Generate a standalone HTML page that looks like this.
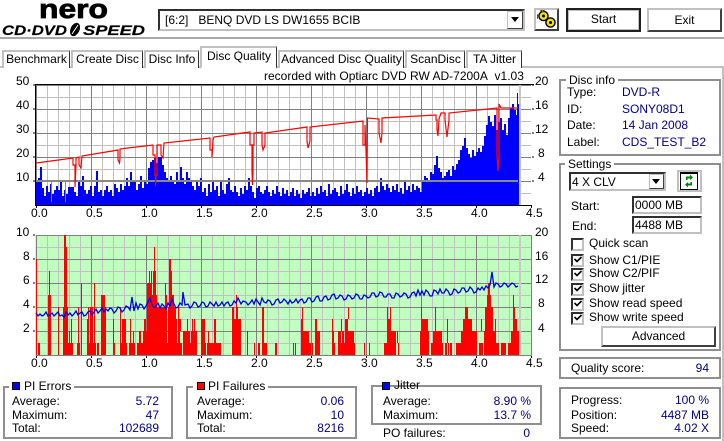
<!DOCTYPE html>
<html><head><meta charset="utf-8"><style>
html,body{margin:0;padding:0;background:#fff}
body{width:724px;height:441px;position:relative;overflow:hidden;font:12px/14px "Liberation Sans",sans-serif;color:#000}
.t{position:absolute;white-space:nowrap;height:14px;line-height:14px}
.v{color:#000080;text-align:right}
.b{position:absolute;box-sizing:border-box}
.g{position:absolute;box-sizing:border-box;border:2px solid #8f8f8f;background:transparent}
.tab{position:absolute;box-sizing:border-box;top:50px;height:18px;border:2px solid #c0c0c0;border-bottom:0;border-right:1px solid #303030;background:#fff;text-align:center;line-height:14px}
.btn{position:absolute;box-sizing:border-box;background:#fff;border:2px solid #c0c0c0;border-right-color:#404040;border-bottom-color:#404040;text-align:center}
.inp{position:absolute;box-sizing:border-box;background:#fff;border:2px solid #c0c0c0;border-top-color:#303030;border-left-color:#303030}
.cb{position:absolute;box-sizing:border-box;left:571px;width:13px;height:13px;background:#fff;border:2px solid #c0c0c0;border-top-color:#303030;border-left-color:#303030}
.lg{background:#fff;padding:0 3px}
.sq{position:absolute;box-sizing:border-box;width:8px;height:8px;border:1px solid #000}
</style></head><body>

<svg class="b" style="left:0;top:0" width="150" height="38" viewBox="0 0 150 38">
<text x="39" y="18" font-family="Liberation Sans" font-weight="700" font-size="27" textLength="69" lengthAdjust="spacingAndGlyphs" stroke="#000" stroke-width=".8">nero</text>
<text x="2" y="35" font-family="Liberation Sans" font-weight="700" font-style="italic" font-size="14" textLength="65" lengthAdjust="spacingAndGlyphs" stroke="#000" stroke-width=".2">CD·DVD</text>
<ellipse cx="75" cy="29.5" rx="4.5" ry="7" transform="rotate(25 75 29.5)" fill="#000"/>
<path d="M72 34L78 25" stroke="#fff" stroke-width="1"/>
<text x="83" y="35" font-family="Liberation Sans" font-weight="700" font-style="italic" font-size="14" textLength="62" lengthAdjust="spacingAndGlyphs" stroke="#000" stroke-width=".2">SPEED</text>
</svg>

<div class="inp" style="left:158px;top:9px;width:367px;height:22px"></div>
<div class="t" style="left:165px;top:13px">[6:2]&nbsp;&nbsp; BENQ DVD LS DW1655 BCIB</div>
<div class="btn" style="left:507px;top:11px;width:16px;height:18px;border-width:1px"></div>
<svg class="b" style="left:511px;top:17px" width="9" height="6"><path d="M0 0H8L4 5Z" fill="#000"/></svg>

<div class="btn" style="left:534px;top:8px;width:25px;height:23px"></div>
<svg class="b" style="left:537px;top:10px" width="20" height="19" viewBox="0 0 20 19">
<circle cx="6.500" cy="6" r="4.600" fill="#f4e400" stroke="#000" stroke-width="1.400"/>
<circle cx="13.500" cy="12.500" r="4.600" fill="#f4e400" stroke="#000" stroke-width="1.400"/>
<path d="M4 1.500V0H7V1.500M1 8H0V5H1" stroke="#000" fill="#f4e400"/>
<circle cx="6.500" cy="6" r="1.500" fill="#000"/><circle cx="13.500" cy="12.500" r="1.500" fill="#000"/>
</svg>
<div class="btn" style="left:566px;top:8px;width:75px;height:24px;border:2px solid #202020;line-height:19px;box-shadow:inset 0 0 0 1px #c0c0c0">Start</div>
<div class="btn" style="left:647px;top:8px;width:75px;height:24px;line-height:20px">Exit</div>
<div class="b" style="left:0;top:37px;width:724px;height:2px;background:#a8a8a8"></div>

<div class="b" style="left:0;top:66px;width:724px;height:375px;border:2px solid #c0c0c0;border-bottom:0;border-left:0"></div>
<div class="tab" style="left:2px;width:68px">Benchmark</div>
<div class="tab" style="left:71px;width:72px">Create Disc</div>
<div class="tab" style="left:144px;width:55px">Disc Info</div>
<div class="tab" style="left:200px;width:77px;top:46px;height:23px;padding-top:1px;border-bottom:2px solid #fff">Disc Quality</div>
<div class="tab" style="left:278px;width:126px">Advanced Disc Quality</div>
<div class="tab" style="left:405px;width:60px">ScanDisc</div>
<div class="tab" style="left:466px;width:56px">TA Jitter</div>

<div class="t" style="left:264px;top:69px">recorded with Optiarc DVD RW AD-7200A&nbsp; v1.03</div>

<svg class="b" style="left:0;top:0" width="550" height="375" viewBox="0 0 550 375">
<defs>
<pattern id="p1" x="36" y="85" width="55" height="24" patternUnits="userSpaceOnUse">
<path d="M11.5 0V24M22.5 0V24M33.5 0V24M44.5 0V24M0 12.5H55" stroke="#c0c0c0" fill="none"/>
<path d="M.5 0V24M0 .5H55" stroke="#808080" fill="none"/>
</pattern>
<pattern id="p2" x="36" y="235" width="55" height="24" patternUnits="userSpaceOnUse">
<path d="M11.5 0V24M22.5 0V24M33.5 0V24M44.5 0V24M0 12.5H55" stroke="#c0c0c0" fill="none"/>
<path d="M.5 0V24M0 .5H55" stroke="#808080" fill="none"/>
</pattern>
</defs>
<rect x="36" y="85" width="495" height="121" fill="#fff"/>
<rect x="36" y="85" width="495" height="121" fill="url(#p1)"/>
<path d="M36 205V182h2V178h2V167h2V188h2V196h2V186h2V192h2V184h2V194h2V190h2V186h2V190h2V182h2V196h2V190h2V194h2V187h2V187h2V187h2V192h2V196h2V180h2V186h2V176h2V190h2V194h2V190h2V186h2V196h2V186h2V171h2V192h2V190h2V196h2V190h2V186h2V192h2V190h2V196h2V184h2V188h2V192h2V184h2V190h2V186h2V178h2V186h2V172h2V180h2V182h2V190h2V184h2V176h2V188h2V180h2V184h2V168h2V162h2V160h2V158h2V163h2V157h2V157h2V165h2V172h2V178h2V182h2V176h2V180h2V184h2V172h2V180h2V167h2V178h2V184h2V172h2V178h2V182h2V186h2V190h2V180h2V186h2V178h2V192h2V188h2V196h2V184h2V192h2V180h2V190h2V186h2V196h2V182h2V190h2V194h2V184h2V178h2V190h2V192h2V186h2V192h2V196h2V188h2V194h2V186h2V190h2V178h2V186h2V192h2V198h2V188h2V186h2V192h2V194h2V190h2V186h2V192h2V196h2V190h2V194h2V186h2V192h2V196h2V188h2V194h2V190h2V196h2V192h2V188h2V196h2V190h2V194h2V198h2V190h2V194h2V192h2V188h2V196h2V192h2V196h2V188h2V194h2V186h2V192h2V190h2V196h2V184h2V194h2V190h2V188h2V192h2V196h2V186h2V194h2V190h2V184h2V192h2V196h2V188h2V194h2V186h2V192h2V190h2V196h2V192h2V188h2V194h2V190h2V196h2V188h2V186h2V192h2V178h2V186h2V190h2V184h2V188h2V192h2V186h2V190h2V184h2V192h2V188h2V194h2V182h2V190h2V186h2V192h2V184h2V190h2V186h2V188h2V192h2V180h2V176h2V178h2V182h2V172h2V174h2V165h2V156h2V168h2V172h2V178h2V176h2V172h2V170h2V176h2V166h2V170h2V164h2V160h2V150h2V146h2V138h2V148h2V154h2V158h2V150h2V156h2V152h2V148h2V152h2V146h2V136h2V125h2V116h2V122h2V126h2V115h2V130h2V122h2V118h2V130h2V124h2V135h2V118h2V108h2V104h2V110h2V115h1V93h1V104h1V205Z" fill="#0000ff"/>
<path d="M36 181H518" stroke="#888" stroke-width="2" fill="none"/>
<path d="M51.500 181V202M65.500 181V202" stroke="#888" fill="none"/>
<rect x="519" y="85" width="2" height="120" fill="#c8c8c8"/>
<path d="M36 163L73 158V165H75V187L76 165V158L79 157V165L81 168L82 156L118 150V160L119.500 163L120 158V149L153 145V155H155V175H155.500V186L156 175H157V145H161V155L163 158L164 143L210 138V150H212V157L213 140L214 137L250 132V145H252V171L252.500 185L253 171V145H254V133L262 132V145L263 150L265 145V133L307 127V141L308 148L310 141V127L363 121V145H365V125L366 150L367 183L367.500 118L379 119V133L381 143L382 133V118L436 115V120H437V130L438 136L439 119L441 113L445 113V120L447 137L449 120V113L497 108V155L498 171L499 155V104L501 108L518 108" stroke="#f00" stroke-width="1.200" fill="none"/>
<path d="M35.500 84V206M35 84.500H534M35 205.500H532" stroke="#000" fill="none"/>
<path d="M33 85H35M33 109H35M33 133H35M33 157H35M33 181H35M36.500 206V208M91.500 206V208M146.500 206V208M201.500 206V208M256.500 206V208M311.500 206V208M366.500 206V208M421.500 206V208M476.500 206V208M531.500 206V208M532 85H534M532 109H534M532 133H534M532 157H534M532 181H534" stroke="#000" fill="none"/>

<rect x="35" y="235" width="497" height="121" fill="#c0ffc0"/>
<rect x="36" y="235" width="496" height="121" fill="url(#p2)"/>
<g fill="none" stroke="#f00" stroke-width="12">
<path d="M36 349h1M38 349h2M48 349h3M58 349h1M63 349h10M77 349h3M81 349h1M87 349h6M93 349h3M97 349h2M101 349h5M113 349h2M120 349h7M129 349h6M137 349h45M183 349h14M201 349h5M207 349h12M219 349h2M232 349h9M247 349h1M254 349h1M258 349h2M262 349h5M275 349h2M293 349h1M295 349h1M301 349h10M312 349h1M315 349h5M332 349h3M338 349h6M344 349h11M364 349h1M369 349h1M384 349h12M398 349h1M420 349h9M431 349h12M445 349h2M448 349h1M450 349h2M456 349h21M479 349h4M484 349h14M498 349h1M501 349h5M508 349h3M511 349h9"/>
<path d="M36 337h1M48 337h3M58 337h1M63 337h5M69 337h1M71 337h1M78 337h1M81 337h1M87 337h2M90 337h3M94 337h1M101 337h5M113 337h1M120 337h1M122 337h4M130 337h1M133 337h1M139 337h2M143 337h24M168 337h9M178 337h2M183 337h7M191 337h6M201 337h4M208 337h1M214 337h2M232 337h9M247 337h1M262 337h2M301 337h8M315 337h5M332 337h2M338 337h3M342 337h2M345 337h9M387 337h9M397 337h1M420 337h9M433 337h9M447 337h1M461 337h16M484 337h11M495 337h1M511 337h9"/>
<path d="M36 325h1M48 325h3M58 325h1M63 325h5M71 325h1M78 325h1M81 325h1M87 325h2M90 325h3M94 325h1M101 325h5M113 325h1M120 325h1M122 325h4M130 325h1M144 325h2M147 325h20M168 325h9M178 325h3M187 325h1M192 325h1M194 325h1M201 325h4M214 325h2M232 325h9M262 325h2M301 325h2M315 325h2M332 325h1M341 325h1M345 325h3M387 325h4M421 325h7M435 325h1M447 325h1M463 325h8M471 325h1M481 325h1M485 325h8M495 325h1M513 325h3M516 325h1"/>
<path d="M36 313h1M48 313h3M58 313h1M63 313h5M78 313h1M81 313h1M88 313h1M90 313h3M94 313h1M101 313h5M120 313h1M147 313h20M168 313h8M178 313h1M232 313h2M236 313h2M262 313h2M302 313h1M348 313h1M387 313h1M390 313h1M421 313h1M435 313h1M465 313h3M485 313h8M513 313h2"/>
<path d="M36 301h1M48 301h3M64 301h3M81 301h1M94 301h1M101 301h4M147 301h4M151 301h6M165 301h2M169 301h5M236 301h1M487 301h4M513 301h1"/>
<path d="M36 289h1M49 289h1M64 289h3M81 289h1M94 289h1M147 289h4M151 289h1M153 289h3M165 289h1M169 289h3M488 289h2"/>
<path d="M36 277h1M49 277h1M64 277h3M149 277h1M151 277h1M153 277h3M169 277h3"/>
<path d="M36 265h1M64 265h3M154 265h1M169 265h2"/>
<path d="M64 253h3M154 253h1"/>
<path d="M64 241h2"/>
</g>
<rect x="519" y="235" width="2" height="120" fill="#c8c8c8"/>
<polyline fill="none" stroke="#0000e8" stroke-width="1.300" points="36,313 38,316 40,314 42,316 44,315 46,312 48,316 50,315 52,313 54,316 56,314 58,312 60,316 62,315 64,317 66,312 68,315 70,313 72,316 74,314 76,311 78,315 80,313 82,312 84,316 86,315 88,312 90,311 92,315 94,312 96,309 98,313 100,311 102,308 104,312 106,309 108,311 110,308 112,309 114,313 116,311 118,307 120,308 122,312 124,310 126,306 128,307 130,310 132,297 134,311 136,303 138,309 140,304 142,305 144,309 146,306 148,302 150,298 152,305 154,308 156,306 158,303 160,308 162,304 164,306 166,309 168,303 170,306 172,299 174,304 176,308 178,307 180,303 182,305 183,292 185,305 188,304 190,308 192,306 194,302 196,303 198,307 200,306 202,302 204,303 206,307 208,306 210,302 212,304 214,306 216,302 218,306 220,305 222,302 224,306 226,303 228,302 230,306 232,305 234,301 236,303 238,298 241,304 243,301 246,302 248,305 250,303 252,300 254,304 256,299 258,302 260,305 262,298 264,302 266,303 268,300 270,301 272,305 274,304 276,300 278,299 280,303 282,302 284,299 286,301 288,304 290,300 292,303 294,302 296,299 298,303 300,300 302,299 304,303 306,302 308,298 310,298 312,302 314,301 316,297 318,296 320,301 322,301 324,297 326,296 328,300 330,299 332,295 334,294 336,299 338,298 340,295 342,296 344,300 346,299 348,295 350,296 352,299 354,298 356,294 358,295 360,299 362,299 364,295 366,296 368,298 370,297 372,293 374,293 376,297 378,296 380,292 382,293 384,297 386,297 388,294 390,294 392,298 394,298 396,293 398,294 400,297 402,296 404,293 406,294 408,298 410,297 412,293 414,292 416,296 418,290 420,295 422,291 424,295 426,290 428,292 430,296 432,296 434,290 436,291 438,294 440,289 442,293 444,293 446,289 448,291 450,295 452,294 454,289 456,290 458,293 460,292 462,288 464,288 466,292 468,291 470,287 472,289 474,293 476,292 478,288 480,290 482,287 484,290 486,286 488,288 490,285 492,272 494,287 496,283 498,284 500,287 502,286 504,283 506,284 508,287 510,285 512,283 514,284 516,287 518,286"/>
<path d="M33 235H35M33 259H35M33 283H35M33 307H35M33 331H35M36.500 356V358M91.500 356V358M146.500 356V358M201.500 356V358M256.500 356V358M311.500 356V358M366.500 356V358M421.500 356V358M476.500 356V358M531.500 356V358" stroke="#000" fill="none"/>
</svg>

<div class="t" style="left:16px;top:74px">50</div><div class="t" style="left:16px;top:98px">40</div><div class="t" style="left:16px;top:122px">30</div><div class="t" style="left:16px;top:146px">20</div><div class="t" style="left:16px;top:170px">10</div>
<div class="t" style="left:535px;top:74px">20</div><div class="t" style="left:535px;top:98px">16</div><div class="t" style="left:535px;top:122px">12</div><div class="t" style="left:538px;top:146px">8</div><div class="t" style="left:538px;top:170px">4</div>
<div class="t" style="left:31px;top:206px">0.0</div><div class="t" style="left:86px;top:206px">0.5</div><div class="t" style="left:141px;top:206px">1.0</div><div class="t" style="left:196px;top:206px">1.5</div><div class="t" style="left:251px;top:206px">2.0</div><div class="t" style="left:306px;top:206px">2.5</div><div class="t" style="left:361px;top:206px">3.0</div><div class="t" style="left:416px;top:206px">3.5</div><div class="t" style="left:471px;top:206px">4.0</div><div class="t" style="left:526px;top:206px">4.5</div>

<div class="t" style="left:16px;top:225px">10</div><div class="t" style="left:23px;top:249px">8</div><div class="t" style="left:23px;top:273px">6</div><div class="t" style="left:23px;top:297px">4</div><div class="t" style="left:23px;top:321px">2</div>
<div class="t" style="left:535px;top:225px">20</div><div class="t" style="left:535px;top:249px">16</div><div class="t" style="left:535px;top:272px">12</div><div class="t" style="left:538px;top:296px">8</div><div class="t" style="left:538px;top:321px">4</div>
<div class="t" style="left:31px;top:356px">0.0</div><div class="t" style="left:86px;top:356px">0.5</div><div class="t" style="left:141px;top:356px">1.0</div><div class="t" style="left:196px;top:356px">1.5</div><div class="t" style="left:251px;top:356px">2.0</div><div class="t" style="left:306px;top:356px">2.5</div><div class="t" style="left:361px;top:356px">3.0</div><div class="t" style="left:416px;top:356px">3.5</div><div class="t" style="left:471px;top:356px">4.0</div><div class="t" style="left:526px;top:356px">4.5</div>

<div class="g" style="left:559px;top:79px;width:162px;height:77px"></div>
<div class="t lg" style="left:566px;top:73px">Disc info</div>
<div class="t" style="left:567px;top:85px">Type:</div><div class="t" style="left:622px;top:85px;color:#000080">DVD-R</div>
<div class="t" style="left:567px;top:102px">ID:</div><div class="t" style="left:622px;top:102px;color:#000080">SONY08D1</div>
<div class="t" style="left:567px;top:118px">Date:</div><div class="t" style="left:622px;top:118px;color:#000080">14 Jan 2008</div>
<div class="t" style="left:567px;top:135px">Label:</div><div class="t" style="left:622px;top:135px;color:#000080">CDS_TEST_B2</div>

<div class="g" style="left:559px;top:163px;width:162px;height:188px"></div>
<div class="t lg" style="left:565px;top:157px">Settings</div>
<div class="inp" style="left:569px;top:172px;width:97px;height:19px"></div>
<div class="t" style="left:572px;top:175px">4 X CLV</div>
<div class="btn" style="left:649px;top:174px;width:15px;height:15px;border-width:1px"></div>
<svg class="b" style="left:652px;top:179px" width="9" height="6"><path d="M0 0H8L4 5Z" fill="#000"/></svg>
<div class="b" style="left:677px;top:170px;width:25px;height:22px;border:2px solid #c0c0c0;background:#fff"></div>
<div class="b" style="left:680px;top:172px;width:18px;height:18px;border:1px solid #000;border-top-width:2px;background:#fff"></div>
<svg class="b" style="left:682px;top:173px" width="14" height="16" viewBox="0 0 14 16"><path d="M4 7V3.500H8V1.500L11 4.500L8 7V5.500H5.500V7ZM10 9V12.500H6V14.500L3 11.500L6 9V10.500H8.500V9Z" fill="#008000"/></svg>
<div class="t" style="left:571px;top:199px">Start:</div>
<div class="inp" style="left:632px;top:196px;width:70px;height:18px"></div>
<div class="t" style="left:635px;top:198px">0000 MB</div>
<div class="t" style="left:572px;top:219px">End:</div>
<div class="inp" style="left:632px;top:216px;width:70px;height:18px"></div>
<div class="t" style="left:635px;top:218px">4488 MB</div>

<div class="cb" style="top:238px"></div><div class="t" style="left:589px;top:236px">Quick scan</div>
<div class="cb" style="top:254px"></div><div class="t" style="left:589px;top:253px">Show C1/PIE</div>
<div class="cb" style="top:268px"></div><div class="t" style="left:589px;top:266px">Show C2/PIF</div>
<div class="cb" style="top:283px"></div><div class="t" style="left:589px;top:281px">Show jitter</div>
<div class="cb" style="top:298px"></div><div class="t" style="left:589px;top:296px">Show read speed</div>
<div class="cb" style="top:312px"></div><div class="t" style="left:589px;top:310px">Show write speed</div>
<svg class="b" style="left:573px;top:254px" width="10" height="72" fill="none" stroke="#000" stroke-width="1.600"><path d="M1.500 5L4 7.500L8.500 3M1.500 19L4 21.500L8.500 17M1.500 34L4 36.500L8.500 32M1.500 49L4 51.500L8.500 47M1.500 63L4 65.500L8.500 61"/></svg>
<div class="btn" style="left:601px;top:326px;width:115px;height:21px;line-height:17px">Advanced</div>

<div class="g" style="left:559px;top:357px;width:162px;height:22px"></div>
<div class="t" style="left:571px;top:361px">Quality score:</div><div class="t v" style="left:660px;width:49px;top:361px">94</div>
<div class="g" style="left:559px;top:387px;width:162px;height:52px"></div>
<div class="t" style="left:571px;top:393px">Progress:</div><div class="t v" style="left:640px;width:69px;top:393px">100 %</div>
<div class="t" style="left:571px;top:408px">Position:</div><div class="t v" style="left:640px;width:69px;top:408px">4487 MB</div>
<div class="t" style="left:571px;top:421px">Speed:</div><div class="t v" style="left:640px;width:69px;top:421px">4.02 X</div>

<div class="g" style="left:3px;top:386px;width:170px;height:53px"></div>
<div class="t lg" style="left:9px;top:379px;padding-left:15px">PI Errors</div>
<div class="sq" style="left:12px;top:382px;background:#00f"></div>
<div class="t" style="left:12px;top:394px">Average:</div><div class="t v" style="left:100px;width:59px;top:394px">5.72</div>
<div class="t" style="left:12px;top:408px">Maximum:</div><div class="t v" style="left:100px;width:59px;top:408px">47</div>
<div class="t" style="left:12px;top:421px">Total:</div><div class="t v" style="left:100px;width:59px;top:421px">102689</div>

<div class="g" style="left:186px;top:386px;width:171px;height:53px"></div>
<div class="t lg" style="left:193px;top:379px;padding-left:15px">PI Failures</div>
<div class="sq" style="left:197px;top:382px;background:#f00"></div>
<div class="t" style="left:197px;top:394px">Average:</div><div class="t v" style="left:285px;width:59px;top:394px">0.06</div>
<div class="t" style="left:197px;top:408px">Maximum:</div><div class="t v" style="left:285px;width:59px;top:408px">10</div>
<div class="t" style="left:197px;top:421px">Total:</div><div class="t v" style="left:285px;width:59px;top:421px">8216</div>

<div class="g" style="left:371px;top:385px;width:171px;height:40px"></div>
<div class="sq" style="left:382px;top:382px;background:#00f"></div>
<div class="t" style="left:394px;top:378px">Jitter</div>
<div class="t" style="left:383px;top:394px">Average:</div><div class="t v" style="left:472px;width:59px;top:394px">8.90 %</div>
<div class="t" style="left:383px;top:408px">Maximum:</div><div class="t v" style="left:472px;width:59px;top:408px">13.7 %</div>
<div class="t" style="left:383px;top:426px">PO failures:</div><div class="t v" style="left:472px;width:58px;top:426px">0</div>
</body></html>
